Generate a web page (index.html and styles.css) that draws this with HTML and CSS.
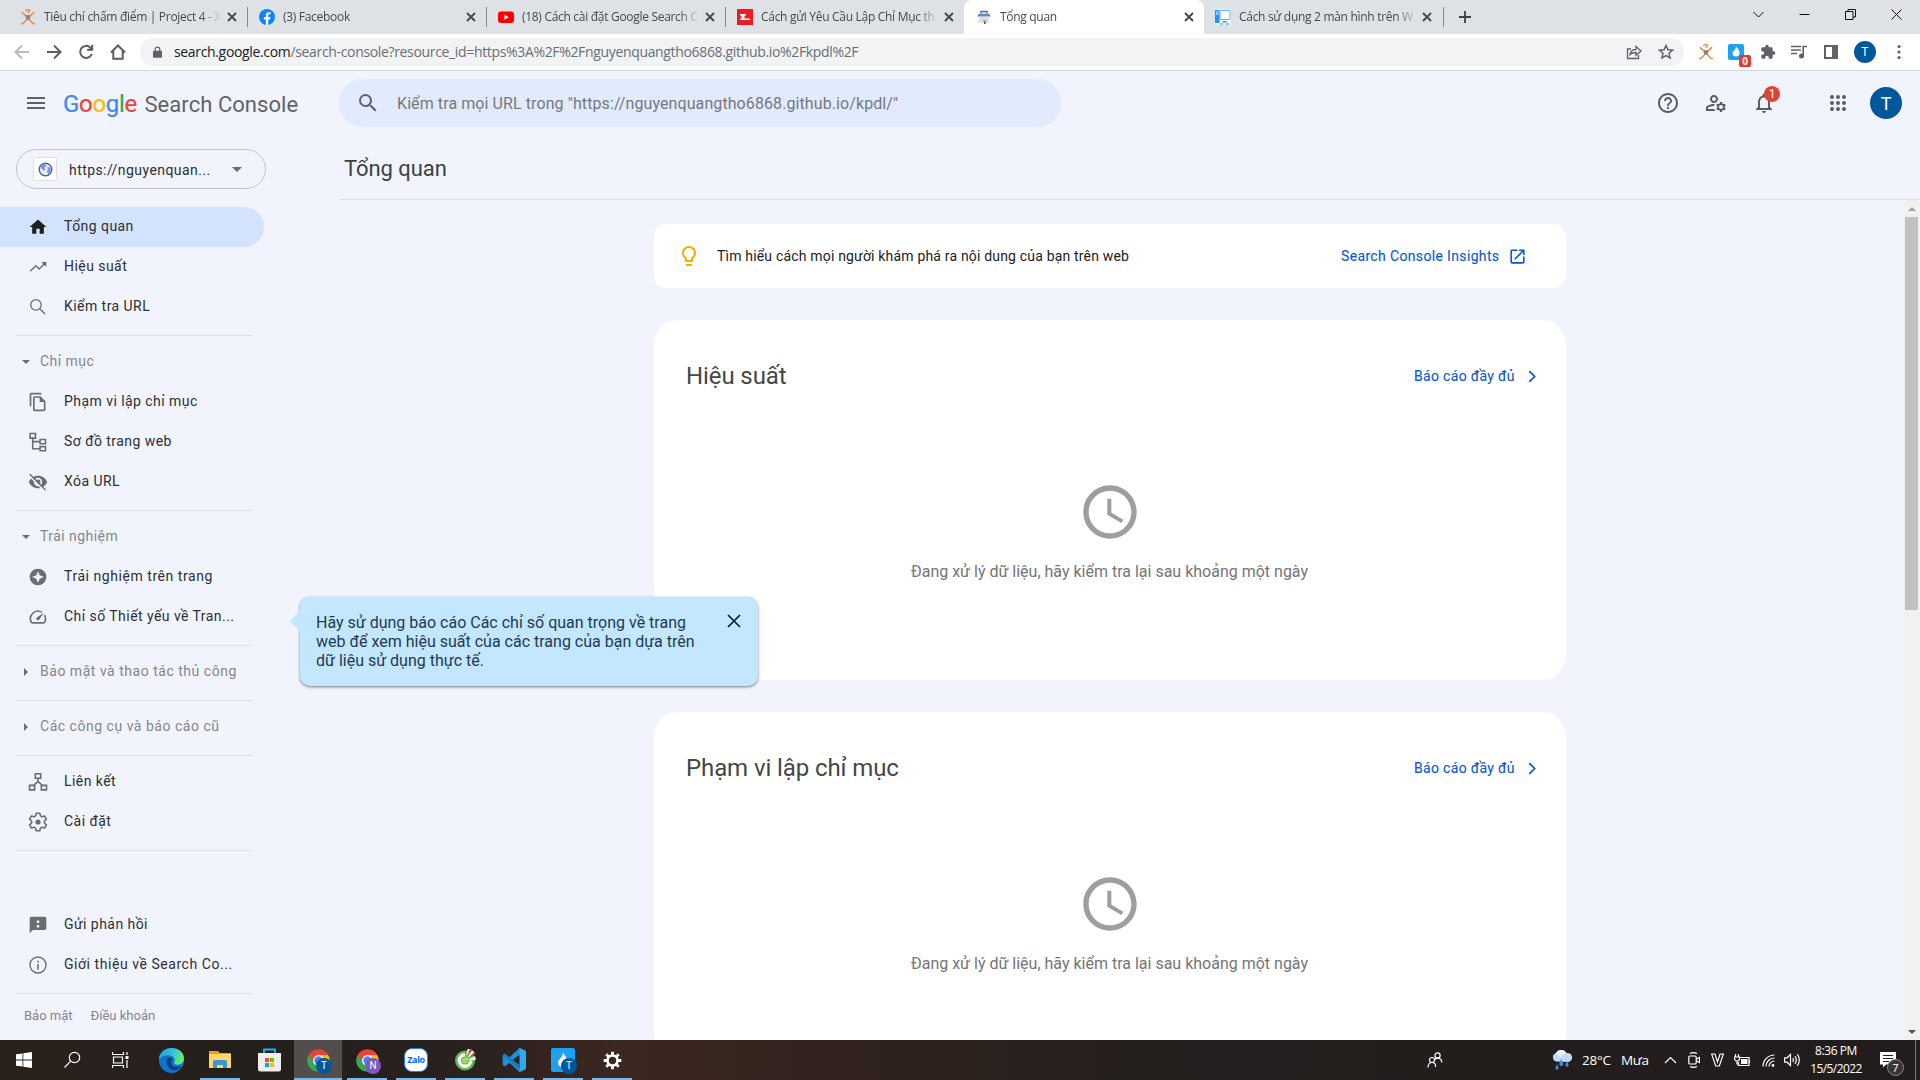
FILE: index.html
```html
<!DOCTYPE html>
<html lang="vi">
<head>
<meta charset="utf-8">
<title>Tổng quan</title>
<link rel="stylesheet" href="styles.css">
</head>
<body>
<svg class="defs" aria-hidden="true">
  <symbol id="x" viewBox="0 0 10 10"><path d="M1 1l8 8M9 1l-8 8" stroke="#45494d" stroke-width="1.9" fill="none"/></symbol>
  <symbol id="runner" viewBox="0 0 16 18"><g fill="none" stroke="#f0883a" stroke-width="1.6" stroke-linecap="round" stroke-linejoin="round"><path d="M5.500 1.500Q8-.2 9.800 1.200Q10 3 8 3.800M1.500 4l4.500 4h4l4.500-4M6 8.500l.5 3.500-4.500 4.500H.8M10 8.500L9.500 12l4.500 4.500h1.200"/></g><path d="M5.500 7h5l-1.200 5H6.700z" fill="#7a8596"/></symbol>
  <symbol id="chrome" viewBox="0 0 48 48"><path d="M24 24L5.500 13.300A21.400 21.400 0 0 1 42.500 13.300z" fill="#ea4335"/><path d="M24 24V13.300h18.500A21.400 21.400 0 0 1 24 45.400z" fill="#fbbc04"/><path d="M24 24l9.300 5.400L24 45.400A21.400 21.400 0 0 1 5.500 13.300z" fill="#34a853"/><path d="M5.500 13.300A21.400 21.400 0 0 1 42.500 13.300H24L14.700 29.300z" fill="#ea4335"/><path d="M5.500 13.300l9.200 16 9.300 5.400-6 10A21.400 21.400 0 0 1 5.500 13.300z" fill="#34a853"/><circle cx="24" cy="24" r="10.500" fill="#fff"/><circle cx="24" cy="24" r="8" fill="#4285f4"/></symbol>
  <symbol id="clock" viewBox="0 0 24 24"><path d="M11.990 2C6.470 2 2 6.480 2 12s4.470 10 9.990 10C17.520 22 22 17.520 22 12S17.520 2 11.990 2zM12 20c-4.420 0-8-3.580-8-8s3.580-8 8-8 8 3.580 8 8-3.580 8-8 8zm.5-13H11v6l5.250 3.150.75-1.230-4.500-2.670z"/></symbol>
  <symbol id="search" viewBox="0 0 24 24"><path d="M15.500 14h-.79l-.28-.27A6.471 6.471 0 0 0 16 9.500 6.500 6.500 0 1 0 9.500 16c1.610 0 3.090-.59 4.230-1.570l.27.28v.79l5 4.990L20.490 19l-4.990-5zm-6 0C7.010 14 5 11.990 5 9.500S7.010 5 9.500 5 14 7.010 14 9.500 11.990 14 9.500 14z"/></symbol>
  <symbol id="down" viewBox="0 0 10 5"><path d="M0 0h10L5 5z"/></symbol>
  <symbol id="right" viewBox="0 0 5 10"><path d="M0 0v10l5-5z"/></symbol>
  <symbol id="cog" viewBox="0 0 22 22"><g fill="none" stroke="#fff"><circle cx="11" cy="11" r="5.800" stroke-width="3"/><path d="M11 .8v4M11 17.200v4M.8 11h4M17.200 11h4M3.800 3.800l2.800 2.800M15.400 15.400l2.800 2.800M3.800 18.200l2.800-2.800M15.400 6.600l2.800-2.800" stroke-width="3.200"/></g></symbol>
</svg>

<div class="tabstrip">
  <div class="tab"><svg class="fav"><use href="#runner"/></svg><span class="tt">Tiêu chí chấm điểm | Project 4 - X</span><svg class="tx"><use href="#x"/></svg></div>
  <div class="tab"><svg class="fav" viewBox="0 0 16 16"><circle cx="8" cy="8" r="8" fill="#1283f7"/><path d="M6.900 16v-5.600H4.900V8h2V6.300c0-2 1.200-3.100 3-3.100.9 0 1.600.1 1.600.1v2h-1c-1 0-1.300.6-1.300 1.200V8h2.200l-.4 2.400H9.200V16z" fill="#fff"/></svg><span class="tt">(3) Facebook</span><svg class="tx"><use href="#x"/></svg></div>
  <div class="tab"><svg class="fav" viewBox="0 0 16 16"><rect y="2.500" width="16" height="11.500" rx="3" fill="#f00"/><path d="M6.400 5.800v5l4.300-2.500z" fill="#fff"/></svg><span class="tt">(18) Cách cài đặt Google Search C</span><svg class="tx"><use href="#x"/></svg></div>
  <div class="tab nosep"><svg class="fav" viewBox="0 0 16 16"><path d="M0 0h16v16H0z" fill="#ed1c24"/><path d="M3 5h6v1.500H7.500v3H13V11H3V9.500h1.500v-3H3z" fill="#fff"/></svg><span class="tt">Cách gửi Yêu Cầu Lập Chỉ Mục th</span><svg class="tx"><use href="#x"/></svg></div>
  <div class="tab active"><svg class="fav" viewBox="0 0 16 16"><path d="M5 4.500V2.500h6v2" fill="none" stroke="#6a6d70" stroke-width="1.500"/><path d="M3 4.500h10l2 3H1z" fill="#999da1"/><path d="M2.500 5.500h11v2h-11z" fill="#4285f4"/><path d="M2.500 7.500h11v6.500h-11z" fill="#e3e3e3"/><path d="M7 9.500a2 2 0 1 0 3.500 0v2H7zM8 12h1.700v3H8z" fill="#555"/></svg><span class="tt">Tổng quan</span><svg class="tx"><use href="#x"/></svg></div>
  <div class="tab last"><svg class="fav" viewBox="0 0 16 16"><path d="M0 0h16v16H0z" fill="#eef5fc"/><path d="M0 1h4.500v13H0z" fill="#1e90ff"/><path d="M1 3h2.500M1 5h2.500" stroke="#fff"/><rect x="5" y="1.500" width="10" height="9" rx="1" fill="#fff" stroke="#5cb0ff"/><path d="M7.500 12h4v1.500h-4zM5 14.500h3v1H5zM11 14.500h3v1h-3z" fill="#2c9aff"/></svg><span class="tt">Cách sử dụng 2 màn hình trên W</span><svg class="tx"><use href="#x"/></svg></div>
  <svg class="plus" viewBox="0 0 12 12"><path d="M6 0v12M0 6h12" stroke="#3c4043" stroke-width="1.800"/></svg>
  <div class="winctl">
    <svg viewBox="0 0 11 11"><path d="M.5 3l5 5 5-5" /></svg>
    <svg viewBox="0 0 11 11"><path d="M.5 5.500h10"/></svg>
    <svg viewBox="0 0 11 11"><path d="M.5 2.500h7.500v8H.5zM3 2.500v-2h7.500v7.500H8"/></svg>
    <svg viewBox="0 0 11 11"><path d="M.5.5l10 10M10.500.5l-10 10"/></svg>
  </div>
</div>

<div class="toolbar">
  <svg class="tb dim" viewBox="0 0 16 16"><path d="M15 8H2M8 1.500L1.500 8 8 14.500"/></svg>
  <svg class="tb" viewBox="0 0 16 16"><path d="M1 8h13M8 1.500L14.500 8 8 14.500"/></svg>
  <svg class="tb" viewBox="0 0 16 16"><path d="M13.800 10A6 6 0 1 1 12.500 3.700L14 5.200M14.200.8v5H9.200"/></svg>
  <svg class="tb" viewBox="0 0 16 16"><path d="M1 8.500L8 1.500l7 7M3.300 7v7.700h9.400V7"/></svg>
  <div class="omnibox">
    <svg class="lock" viewBox="0 0 10 13"><path d="M1 5h8a1 1 0 0 1 1 1v6a1 1 0 0 1-1 1H1a1 1 0 0 1-1-1V6a1 1 0 0 1 1-1z" fill="#5f6368"/><path d="M2.500 5.500v-2a2.500 2.500 0 0 1 5 0v2" fill="none" stroke="#5f6368" stroke-width="1.300"/></svg>
    <span class="url"><b>search.google.com</b>/search-console?resource_id=https%3A%2F%2Fnguyenquangtho6868.github.io%2Fkpdl%2F</span>
    <svg class="ic16 thin" viewBox="0 0 16 16"><path d="M5 5H1.500v9.500h11V11M4 10.500C4.500 7 7 5.500 10 5.500V2.500L15 7l-5 4.300V8.500c-2.500 0-4.500.5-6 2z"/></svg>
    <svg class="ic16 thin" viewBox="0 0 16 16"><path d="M8 1.500l1.900 4.300 4.700.4-3.600 3.100 1.100 4.600L8 11.500l-4.100 2.400L5 9.300 1.400 6.200l4.700-.4z" stroke-width="1.500"/></svg>
  </div>
  <div class="exts">
    <svg class="ext runner"><use href="#runner"/></svg>
    <div class="extb"><svg viewBox="0 0 16 16"><rect width="16" height="16" rx="2" fill="#1da1f2"/><path d="M8 2.500c3 3 3.500 5 3.500 6.500a3.500 3.500 0 0 1-7 0C4.500 7.500 8 6 8 2.500z" fill="#fff"/></svg><i>0</i></div>
    <svg class="ext fill" viewBox="0 0 24 24"><path d="M20.500 11H19V7c0-1.100-.9-2-2-2h-4V3.500a2.500 2.500 0 0 0-5 0V5H4c-1.100 0-2 .9-2 2v3.800h1.500c1.500 0 2.700 1.200 2.700 2.700S5 16.200 3.500 16.200H2V20c0 1.100.9 2 2 2h3.800v-1.500c0-1.500 1.200-2.700 2.700-2.700s2.700 1.200 2.700 2.700V22H17c1.100 0 2-.9 2-2v-4h1.500a2.500 2.500 0 0 0 0-5z"/></svg>
    <svg class="ext" viewBox="0 0 16 16"><path d="M0 2.500h10M0 6h10M0 9.500h6" stroke="#5f6368" stroke-width="1.600"/><path d="M12.200 12V2.500H16" stroke="#5f6368" stroke-width="1.600" fill="none"/><circle cx="10.500" cy="12" r="2.500" fill="#5f6368"/></svg>
    <svg class="ext" viewBox="0 0 16 16"><path d="M1 1h14v14H1zM3 3v10h6V3z" fill="#5f6368" fill-rule="evenodd"/></svg>
    <span class="ava small">T</span>
    <svg class="ext" viewBox="0 0 16 16" fill="#5f6368"><circle cx="8" cy="2.500" r="1.600"/><circle cx="8" cy="8" r="1.600"/><circle cx="8" cy="13.500" r="1.600"/></svg>
  </div>
</div>

<div class="page">
  <header class="top">
    <svg class="burger" viewBox="0 0 18 14"><path d="M0 2h18M0 7h18M0 12h18" stroke="#5f6368" stroke-width="2"/></svg>
    <div class="brand"><span class="g"><span class="b">G</span><span class="r">o</span><span class="y">o</span><span class="b">g</span><span class="gr">l</span><span class="r">e</span></span><span class="sc">Search Console</span></div>
    <div class="sbox"><svg><use href="#search"/></svg><span>Kiểm tra mọi URL trong "https://nguyenquangtho6868.github.io/kpdl/"</span></div>
    <div class="acts">
      <svg viewBox="0 0 24 24"><path d="M11 18h2v-2h-2v2zm1-16C6.480 2 2 6.480 2 12s4.480 10 10 10 10-4.480 10-10S17.520 2 12 2zm0 18c-4.410 0-8-3.590-8-8s3.590-8 8-8 8 3.590 8 8-3.590 8-8 8zm0-14c-2.210 0-4 1.790-4 4h2c0-1.100.9-2 2-2s2 .9 2 2c0 2-3 1.750-3 5h2c0-2.250 3-2.500 3-5 0-2.210-1.790-4-4-4z"/></svg>
      <svg viewBox="0 0 24 24"><path d="M4 18v-.65c0-.34.16-.66.41-.81C6.100 15.530 8.030 15 10 15c.03 0 .05 0 .08.010.1-.7.300-1.370.590-1.980-.22-.020-.44-.030-.67-.030-2.420 0-4.680.67-6.610 1.820-.88.52-1.390 1.500-1.390 2.530V20h9.260c-.42-.6-.75-1.280-.97-2H4zM10 12c2.210 0 4-1.790 4-4s-1.790-4-4-4-4 1.790-4 4 1.790 4 4 4zm0-6c1.100 0 2 .9 2 2s-.9 2-2 2-2-.9-2-2 .9-2 2-2zM20.750 16c0-.22-.030-.42-.060-.63l1.140-1.010-1-1.730-1.450.49c-.32-.27-.68-.48-1.080-.63L18 11h-2l-.3 1.490c-.4.15-.76.36-1.080.63l-1.450-.49-1 1.730 1.140 1.010c-.030.210-.060.410-.060.630s.030.420.060.630l-1.140 1.010 1 1.730 1.450-.49c.32.27.68.48 1.080.63L16 21h2l.3-1.490c.4-.15.76-.36 1.080-.63l1.450.49 1-1.730-1.140-1.010c.030-.210.060-.410.060-.630zM17 18c-1.100 0-2-.9-2-2s.9-2 2-2 2 .9 2 2-.9 2-2 2z"/></svg>
      <div class="bell"><svg viewBox="0 0 24 24"><path d="M12 22c1.100 0 2-.9 2-2h-4c0 1.100.9 2 2 2zm6-6v-5c0-3.070-1.630-5.640-4.500-6.320V4c0-.83-.67-1.500-1.500-1.500s-1.500.67-1.500 1.500v.68C7.640 5.360 6 7.920 6 11v5l-2 2v1h16v-1l-2-2zm-2 1H8v-6c0-2.480 1.510-4.500 4-4.500s4 2.020 4 4.500v6z"/></svg><i>1</i></div>
      <svg class="apps" viewBox="0 0 24 24"><path d="M6 8a2 2 0 1 0 0-4 2 2 0 0 0 0 4zm6 0a2 2 0 1 0 0-4 2 2 0 0 0 0 4zm6 0a2 2 0 1 0 0-4 2 2 0 0 0 0 4zM6 14a2 2 0 1 0 0-4 2 2 0 0 0 0 4zm6 0a2 2 0 1 0 0-4 2 2 0 0 0 0 4zm6 0a2 2 0 1 0 0-4 2 2 0 0 0 0 4zM6 20a2 2 0 1 0 0-4 2 2 0 0 0 0 4zm6 0a2 2 0 1 0 0-4 2 2 0 0 0 0 4zm6 0a2 2 0 1 0 0-4 2 2 0 0 0 0 4z"/></svg>
      <span class="ava">T</span>
    </div>
  </header>

  <div class="body">
    <nav class="side">
      <div class="prop"><span class="globe"><svg viewBox="0 0 16 16"><circle cx="8" cy="8" r="6.700" fill="#e8eefb" stroke="#4f5fb5" stroke-width="1.500"/><path d="M3 4.500L7 2l2 1.500-2 3 1 2-2 .5L3.500 7zM10 5l3.500 1v4L11 13l-1.500-3 1-2z" fill="#8193d2"/></svg></span><span class="pt">https://nguyenquan...</span><svg class="caret"><use href="#down"/></svg></div>

      <div class="it on"><svg viewBox="0 0 24 24"><path d="M10 20v-6h4v6h5v-8h3L12 3 2 12h3v8z"/></svg><span>Tổng quan</span></div>
      <div class="it"><svg viewBox="0 0 24 24"><path d="M16 6l2.290 2.290-4.880 4.880-4-4L2 16.590 3.200 17.800l6.210-6.200 4 4 6.090-6.100L22 12V6z"/></svg><span>Hiệu suất</span></div>
      <div class="it"><svg viewBox="0 0 24 24"><circle cx="9.500" cy="9.500" r="6.300" class="ln"/><path d="M14 14l6.500 6.500" class="ln"/></svg><span>Kiểm tra URL</span></div>
      <hr>
      <div class="sec"><svg class="d"><use href="#down"/></svg><span>Chỉ mục</span></div>
      <div class="it"><svg viewBox="0 0 24 24"><path d="M16 1H4c-1.100 0-2 .9-2 2v14h2V3h12V1zm-1 4H8c-1.100 0-2 .9-2 2v14c0 1.100.9 2 2 2h11c1.100 0 2-.9 2-2V11l-6-6zm4 16H8V7h6v5h5v9z"/></svg><span>Phạm vi lập chỉ mục</span></div>
      <div class="it"><svg viewBox="0 0 24 24"><path d="M2.500 1.800h6.500v5.500H2.500zM14.500 9h6.500v5h-6.500zM14.500 17.500h6.500v5h-6.500zM5.700 7.500V20h8.500M5.700 11.500h8.500" class="ln w2"/></svg><span>Sơ đồ trang web</span></div>
      <div class="it"><svg viewBox="0 0 24 24"><path d="M1 12C2.700 7.600 7 4.500 12 4.500s9.300 3.100 11 7.500c-1.700 4.400-6 7.500-11 7.500S2.700 16.400 1 12zm11-5a5 5 0 1 0 0 10 5 5 0 0 0 0-10z" fill-rule="evenodd"/><circle cx="12" cy="12" r="3"/><path d="M1.500 4.500L19.500 22.500" stroke="#f1f4fd" stroke-width="2"/><path d="M2 2.500L21 21.500" stroke="#6b6e71" stroke-width="1.600"/></svg><span>Xóa URL</span></div>
      <hr>
      <div class="sec"><svg class="d"><use href="#down"/></svg><span>Trải nghiệm</span></div>
      <div class="it wide"><svg viewBox="0 0 24 24"><path d="M12 2a10 10 0 1 0 0 20 10 10 0 0 0 0-20zm2.100 12.100L12 19l-2.100-4.900L5 12l4.900-2.100L12 5l2.100 4.900L19 12z" fill-rule="evenodd"/></svg><span>Trải nghiệm trên trang</span></div>
      <div class="it"><svg viewBox="0 0 24 24"><path d="M20.380 8.570l-1.230 1.850a8 8 0 0 1-.22 7.580H5.070A8 8 0 0 1 15.580 6.850l1.850-1.230A10 10 0 0 0 3.350 19a2 2 0 0 0 1.720 1h13.850a2 2 0 0 0 1.740-1 10 10 0 0 0-.27-10.440zm-9.790 6.840a2 2 0 0 0 2.830 0l5.660-8.490-8.490 5.660a2 2 0 0 0 0 2.830z"/></svg><span>Chỉ số Thiết yếu về Tran...</span></div>
      <hr>
      <div class="sec wide"><svg class="r"><use href="#right"/></svg><span>Bảo mật và thao tác thủ công</span></div>
      <hr>
      <div class="sec wide"><svg class="r"><use href="#right"/></svg><span>Các công cụ và báo cáo cũ</span></div>
      <hr>
      <div class="it"><svg viewBox="0 0 24 24"><path d="M8.800 2h6.400v5.500H8.800zM1.800 16h6.200v5.500H1.800zM16 16h6.200v5.500H16zM12 7.500V12M12 11.500L6.500 16M12 11.500L17.500 16" class="ln w2"/></svg><span>Liên kết</span></div>
      <div class="it"><svg viewBox="0 0 24 24"><path d="M9.800 1.500h4.400l.7 3.200 1.900 1.100 3.100-1 2.200 3.800-2.400 2.200v2.400l2.400 2.200-2.200 3.800-3.100-1-1.900 1.100-.7 3.200H9.800l-.7-3.200-1.900-1.100-3.100 1-2.200-3.800 2.400-2.200v-2.400L1.900 8.600l2.200-3.800 3.100 1 1.900-1.100z" class="ln w2" stroke-linejoin="round"/><circle cx="12" cy="12" r="3.100"/></svg><span>Cài đặt</span></div>
      <hr>
      <div class="it gap"><svg viewBox="0 0 24 24"><path d="M20 2H4c-1.100 0-2 .9-2 2v18l4-4h14c1.100 0 2-.9 2-2V4c0-1.100-.9-2-2-2zm-6.500 13h-3v-3h3zm0-5.500h-3v-3h3z"/></svg><span>Gửi phản hồi</span></div>
      <div class="it wide"><svg viewBox="0 0 24 24"><circle cx="12" cy="12" r="9.600" class="ln"/><path d="M11 11h2v6.500h-2zM11 7h2v2h-2z"/></svg><span>Giới thiệu về Search Co...</span></div>
      <hr>
      <div class="foot"><span>Bảo mật</span><span>Điều khoản</span></div>
    </nav>

    <main class="main">
      <h1>Tổng quan</h1>
      <div class="scroll">
        <div class="cards">
          <section class="tip"><svg class="bulb" viewBox="0 0 24 24"><path d="M9 21c0 .55.45 1 1 1h4c.55 0 1-.45 1-1v-1H9v1zm3-19C8.140 2 5 5.140 5 9c0 2.380 1.190 4.470 3 5.740V17c0 .55.45 1 1 1h6c.55 0 1-.45 1-1v-2.260c1.810-1.270 3-3.360 3-5.740 0-3.860-3.140-7-7-7zm2.850 11.100l-.85.6V16h-4v-2.300l-.85-.6A4.997 4.997 0 0 1 7 9c0-2.760 2.240-5 5-5s5 2.240 5 5c0 1.630-.8 3.160-2.150 4.100z"/></svg><span class="msg">Tìm hiểu cách mọi người khám phá ra nội dung của bạn trên web</span><a class="ins">Search Console Insights</a><svg class="open" viewBox="0 0 24 24"><path d="M19 19H5V5h7V3H5c-1.110 0-2 .9-2 2v14c0 1.100.89 2 2 2h14c1.100 0 2-.9 2-2v-7h-2v7zM14 3v2h3.590l-9.830 9.830 1.410 1.410L19 6.410V10h2V3h-7z"/></svg></section>
          <section class="card"><div class="ch"><h2>Hiệu suất</h2><a>Báo cáo đầy đủ</a><svg viewBox="0 0 8 12"><path d="M1 1l5 5-5 5"/></svg></div><div class="wait"><svg><use href="#clock"/></svg><p>Đang xử lý dữ liệu, hãy kiểm tra lại sau khoảng một ngày</p></div></section>
          <section class="card"><div class="ch"><h2>Phạm vi lập chỉ mục</h2><a>Báo cáo đầy đủ</a><svg viewBox="0 0 8 12"><path d="M1 1l5 5-5 5"/></svg></div><div class="wait"><svg><use href="#clock"/></svg><p>Đang xử lý dữ liệu, hãy kiểm tra lại sau khoảng một ngày</p></div></section>
        </div>
        <div class="bar"><svg class="up" viewBox="0 0 8 4"><path d="M0 4h8L4 0z"/></svg><span class="thumb"></span><svg class="dn" viewBox="0 0 8 4"><path d="M0 0h8L4 4z"/></svg></div>
      </div>
    </main>
  </div>

  <div class="bubble"><p>Hãy sử dụng báo cáo Các chỉ số quan trọng về trang<br>web để xem hiệu suất của các trang của bạn dựa trên<br>dữ liệu sử dụng thực tế.</p><svg viewBox="0 0 14 14"><path d="M1 1l12 12M13 1L1 13" stroke="#001d35" stroke-width="1.700"/></svg></div>
</div>

<footer class="task">
  <div class="sys">
    <span><svg width="16" height="16" viewBox="0 0 16 16"><path d="M0 2.300l6.500-.9v6.200H0zM7.300 1.300L16 0v7.600H7.300zM0 8.400h6.500v6.200L0 13.700zM7.300 8.400H16V16l-8.700-1.300z" fill="#fff"/></svg></span>
    <span><svg width="18" height="18" viewBox="0 0 18 18"><circle cx="11.500" cy="6.500" r="5.200" class="wl"/><path d="M7.700 10.200L1.500 16.500" class="wl"/></svg></span>
    <span><svg width="17" height="16" viewBox="0 0 17 16"><path d="M.5 0v2.500h11V0M.5 16v-2.500h11V16M1.500 5h9v6h-9zM15 0v3M15 8v8" class="wl"/><path d="M13.500 4h3v3h-3z" fill="#fff"/></svg></span>
  </div>
  <div class="apps">
    <span><svg width="25" height="25" viewBox="0 0 24 24"><defs><linearGradient id="e1" x1="0" x2="1" y1="0" y2=".3"><stop stop-color="#1b9de2"/><stop offset=".6" stop-color="#35c1d8"/><stop offset="1" stop-color="#66eb6e"/></linearGradient></defs><circle cx="12" cy="12" r="12" fill="#0f74cc"/><path d="M0 11C0 4 6 0 12 0c7 0 12 4.500 12 10 0 4-3 6-6.500 6-2 0-3.500-.8-3-2 2-3-1-7-5-7C5 7 1 9 0 11z" fill="url(#e1)"/><path d="M9 9c-3 3-2 10 4 12 3 .9 7-.5 9-4-3 1.800-9 1.500-10-2-.6-2 .2-3.500 1-4-1-2-3-2.500-4-2z" fill="#123f7d"/></svg></span>
    <span class="run"><svg width="22" height="20" viewBox="0 0 22 20"><path d="M0 1h9l2 2h11v15H0z" fill="#e9a11c"/><path d="M0 4h22v14H0z" fill="#ffd667"/><path d="M4 18v-6q0-2 2-2h10q2 0 2 2v6h-4v-3H8v3z" fill="#3b93d8"/></svg></span>
    <span><svg width="23" height="24" viewBox="0 0 23 24"><path d="M6 7V1.500h11V7" fill="none" stroke="#29b1ee" stroke-width="1.800"/><path d="M0 5h23v16q0 2.500-2.500 2.500h-18Q0 23.500 0 21z" fill="#eee"/><path d="M7 10h4v4H7z" fill="#f25022"/><path d="M12 10h4v4h-4z" fill="#7fba00"/><path d="M7 15h4v4H7z" fill="#00a4ef"/><path d="M12 15h4v4h-4z" fill="#ffb900"/></svg></span>
    <span class="run cur"><svg width="25" height="25"><use href="#chrome"/></svg><i>T</i></span>
    <span class="run"><svg width="25" height="25"><use href="#chrome"/></svg><i class="pu">N</i></span>
    <span class="run"><b class="zalo">Zalo</b></span>
    <span class="run"><svg width="22" height="22" viewBox="0 0 22 22"><circle cx="11" cy="11.500" r="10" fill="#58b947"/><path d="M11 4a7.500 7.500 0 1 0 7.500 7.500H15A4 4 0 1 1 11 7.500z" fill="#fff"/><circle cx="11" cy="11.500" r="3" fill="#a5d86e"/><path d="M12 9l1.500-9h2.500zM13 10l5-9 3 3zM13 11l8-4 1 4z" fill="#f2f2f2"/><path d="M13 8l3-8h2zM14 9.500l6-6.500 1 2z" fill="#e0533c"/></svg></span>
    <span class="run"><svg width="24" height="24" viewBox="0 0 24 24"><path d="M17.500 0L24 3v18l-6.500 3-10-9.200L3 18.300.7 17V7L3 5.700l4.500 3.500zM18 6.500L10.500 12l7.500 5.500z" fill="#1f8fd8" fill-rule="evenodd"/><path d="M17.500 0L24 3v18l-6.500 3z" fill="#32a9ef"/><path d="M.7 7L3 5.700 18 17.500V22zM2.700 12L.5 14.500V9.500z" fill="#1877b8"/></svg></span>
    <span class="run"><svg width="24" height="24" viewBox="0 0 24 24"><rect width="24" height="24" rx="2" fill="#1da1f2"/><path d="M12 4c2 5 5 6 5 10.500a5 5 0 0 1-10 0C7 11 12 10 12 4z" fill="#fff"/></svg><i>T</i></span>
    <span class="run"><svg width="19" height="19"><use href="#cog"/></svg></span>
  </div>
  <div class="tray">
    <svg class="people" width="16" height="17" viewBox="0 0 16 17"><g class="wl"><circle cx="5" cy="8" r="2.500"/><path d="M1 15.500Q1 10.500 5 10.500T8.500 15"/><circle cx="10.500" cy="3.500" r="2.600"/><path d="M7.500 8Q9 6 11 6.200q3.500.3 3.800 4.300"/></g></svg>
    <svg class="rain" width="22" height="20" viewBox="0 0 22 20"><path d="M5 11.500A4.500 4.500 0 0 1 5 3 6 6 0 0 1 15.500 3 4.500 4.500 0 0 1 17.500 12z" fill="#bfdcf6"/><path d="M5 3a6 6 0 0 1 10.500 0Q10 4 9 8 7 4 5 3z" fill="#e8f4fd"/><path d="M10 9l2 4a2 2 0 1 1-3.500 0zM16 11l1.500 3.500a1.600 1.600 0 1 1-3 0zM6 14l1.500 3.500a1.600 1.600 0 1 1-3 0z" fill="#3f8ee0"/></svg>
    <span class="w1">28°C</span><span class="w2t">Mưa</span>
    <svg class="ti" width="13" height="8" viewBox="0 0 13 8"><path d="M1 7l5.500-5.500L12 7" class="wl"/></svg>
    <svg class="ti" width="12" height="16" viewBox="0 0 12 16"><path d="M2 1.500Q5.500-.3 9 1.500M2 14.500q3.500 1.800 7 0M.8 5Q.8 4 2 4h5q1.200 0 1.200 1v6q0 1-1.200 1H2Q.8 12 .8 11zM8.500 7l3-1.500v5l-3-1.500" class="wl"/></svg>
    <svg class="ti" width="13" height="14" viewBox="0 0 13 14"><path d="M.6 1H4l2.500 8L9 1h3.400L8.300 13H4.700z" class="wl"/></svg>
    <svg class="ti batt" width="17" height="13" viewBox="0 0 17 13"><path d="M5.500 3.500H15v8H4.500V8M15.500 6v3M1.500 0v3M4.500 0v3M.5 3h5v2.500L4 7H2L.5 5.500zM3 7v3h1.500" class="wl"/><path d="M7 5h6.500v5H7z" fill="#fff"/></svg>
    <svg class="ti" width="13" height="13" viewBox="0 0 13 13"><path d="M1 12.500A11.500 11.500 0 0 1 12.500 1M4 12.500A8.500 8.500 0 0 1 12.500 4M7 12.500A5.500 5.500 0 0 1 12.500 7" class="wl"/><circle cx="11" cy="11.500" r="1.400" fill="#fff"/></svg>
    <svg class="ti vol" width="17" height="14" viewBox="0 0 17 14"><path d="M.6 4.800h2.500L6.500 1.500v11L3.100 9.200H.6zM8.800 5q1.200 2 0 4M11 3q2.500 4 0 8M13.300 1q4 6 0 12" class="wl"/></svg>
    <div class="time"><span>8:36 PM</span><span class="dt">15/5/2022</span></div>
    <div class="note"><svg width="16" height="16" viewBox="0 0 16 16"><path d="M0 0h16v12.500H6L3 15.500v-3H0z" fill="#fff"/><path d="M3 3.500h10M3 6.500h10M3 9.500h6" stroke="#222" stroke-width="1.200"/></svg><i>7</i></div>
    <span class="desk"></span>
  </div>
</footer>
</body>
</html>
```
FILE: styles.css
```css
* { box-sizing: border-box; }
body { margin: 0; width: 1920px; height: 1080px; overflow: hidden; display: flex; flex-direction: column; font-family: Roboto, sans-serif; background: #f1f4fd; }
svg { flex: none; display: block; }
i { font-style: normal; }
.defs { position: absolute; width: 0; height: 0; }

/* browser tabs */
.tabstrip { height: 34px; flex: none; background: #dee1e6; display: flex; align-items: center; padding-left: 8px; font: 12px "Open Sans", sans-serif; color: #45494d; }
.tab { width: 239px; height: 34px; display: flex; align-items: center; padding: 0 10px 0 12px; position: relative; }
.tab::after { content: ""; width: 1px; height: 20px; background: #85888c; position: absolute; right: -1px; top: 7px; }
.tab.nosep::after, .tab.active::after { display: none; }
.tab.active { background: #fff; border-radius: 8px 8px 0 0; width: 240px; }
.tab.last { padding: 0 11px; }
.fav { width: 16px; height: 16px; }
.tt { flex: 1; min-width: 0; margin: 0 5px 0 8px; padding-bottom: 1px; white-space: nowrap; letter-spacing: -.3px; -webkit-mask-image: linear-gradient(90deg, #000 88%, transparent); mask-image: linear-gradient(90deg, #000 88%, transparent); }
.tx { width: 10px; height: 10px; }
.plus { width: 12px; height: 12px; margin-left: 16px; }
.winctl { margin-left: auto; display: flex; gap: 35px; padding: 0 18px 6px 0; }
.winctl svg { width: 11px; height: 11px; fill: none; stroke: #111; stroke-width: 1; }

/* browser toolbar */
.toolbar { height: 37px; flex: none; background: #fff; border-bottom: 1px solid #d5d7da; display: flex; align-items: center; padding: 0 14px; }
.tb { width: 16px; height: 16px; margin-right: 16px; fill: none; stroke: #5a5e63; stroke-width: 2; }
.tb.dim { stroke: #b9bbbe; }
.tb:nth-child(4) { margin-right: 14px; }
.omnibox { width: 1544px; flex: none; height: 28px; border-radius: 14px; background: #f1f3f4; display: flex; align-items: center; padding: 0 10px 0 13px; gap: 16px; }
.lock { width: 9px; height: 12px; }
.url { flex: 1; margin-left: -4px; padding-bottom: 1px; font: 14px "Open Sans", sans-serif; letter-spacing: -.34px; color: #6a6e73; }
.url b { font-weight: 400; color: #202124; }
.ic16 { width: 16px; height: 16px; }
.thin { fill: none; stroke: #5f6368; stroke-width: 1.3; }
.exts { flex: 1; display: flex; align-items: center; justify-content: space-between; padding: 0 0 0 15px; }
.ext { width: 16px; height: 16px; }
.ext.runner { width: 14px; height: 18px; }
.ext.fill { fill: #5f6368; margin-left: 1px; }
.extb { width: 16px; height: 16px; position: relative; }
.extb i { position: absolute; left: 11px; top: 11px; width: 12px; height: 12px; border-radius: 2px; background: #e53935; color: #fff; font: 700 10px/12px "Open Sans", sans-serif; text-align: center; }
.ava { width: 32px; height: 32px; border-radius: 50%; background: #01579b; color: #fff; font-size: 18px; display: flex; align-items: center; justify-content: center; }
.ava.small { width: 22px; height: 22px; font-size: 12px; }
.toolbar { padding-right: 13px; }

/* console header */
.page { flex: 1; min-height: 0; position: relative; display: flex; flex-direction: column; }
.top { height: 64px; flex: none; display: flex; align-items: center; padding-left: 27px; }
.burger { width: 18px; height: 14px; }
.brand { width: 276px; margin-left: 18px; padding-top: 2px; display: flex; align-items: baseline; white-space: nowrap; }
.g { font-size: 24px; letter-spacing: -.3px; width: 81.500px; -webkit-text-stroke: .2px; }
.sc { font-size: 22px; letter-spacing: .05px; color: #5f6368; }
.b { color: #4285f4; } .r { color: #ea4335; } .y { color: #fbbc04; } .gr { color: #34a853; }
.sbox { width: 722px; height: 48px; border-radius: 24px; background: #e2ebfd; display: flex; align-items: center; padding-left: 17px; gap: 17px; color: #75787c; font-size: 16px; letter-spacing: .09px; }
.sbox svg { width: 24px; height: 24px; fill: #5f6368; }
.acts { margin-left: auto; padding-right: 18px; display: flex; align-items: center; gap: 24px; }
.acts svg { width: 24px; height: 24px; fill: #5a5e63; }
.acts .apps { margin: 0 -4px 0 26px; }
.bell { position: relative; }
.bell i { position: absolute; left: 12px; top: -5px; width: 16px; height: 16px; border-radius: 50%; background: #db4437; color: #fff; font-size: 12px; line-height: 16px; text-align: center; }

/* side navigation */
.body { flex: 1; min-height: 0; display: flex; }
.side { width: 340px; flex: none; font-size: 14px; letter-spacing: .45px; color: #2d2f31; }
.prop { width: 250px; height: 40px; margin: 14px 0 18px 16px; border: 1px solid #c2c4c6; border-radius: 20px; display: flex; align-items: center; padding-left: 16px; }
.globe { width: 24px; height: 24px; background: #fff; border: 1px solid #e0e0e0; border-radius: 2px; display: flex; align-items: center; justify-content: center; }
.globe svg { width: 15px; height: 15px; }
.pt { width: 151px; margin: 2px 12px 0 12px; letter-spacing: .43px; }
.caret { width: 10px; height: 5px; fill: #6b6e71; }
.it { height: 40px; display: flex; align-items: center; padding: 0 0 0 28px; width: 264px; white-space: nowrap; }
.it svg { width: 20px; height: 20px; fill: #6b6e71; margin-right: 16px; }
.it span, .sec span { padding-bottom: 2px; }
.it.wide { letter-spacing: .55px; }
.sec.wide { letter-spacing: .52px; }
.ln { fill: none; stroke: #6b6e71; stroke-width: 1.6; }
.w2 { stroke-width: 1.9; }
.it.on svg { fill: #1f1f1f; }
.on { background: #d3e3fd; border-radius: 0 20px 20px 0; }
.side hr { width: 236px; height: 1px; border: 0; margin: 8px 0 6px 16px; background: #dfe1e4; }
.sec { height: 40px; display: flex; align-items: center; padding-left: 22px; color: #83868a; white-space: nowrap; }
.sec svg { fill: #6b6e71; }
.sec .d { width: 8px; height: 4px; margin-right: 10px; }
.sec .r { width: 4px; height: 8px; margin: 0 12px 0 2px; }
.it.gap { margin-top: 54px; }
.foot { display: flex; gap: 18px; padding: 8px 0 0 24px; font-size: 13px; letter-spacing: 0; color: #83868a; }

/* main column */
.main { flex: 1; min-width: 0; display: flex; flex-direction: column; }
h1 { height: 65px; flex: none; margin: 0; padding: 22px 0 0 4px; font-size: 22px; line-height: 24px; font-weight: 400; letter-spacing: -.05px; color: #3c4043; border-bottom: 1px solid #dfe1e4; }
.scroll { flex: 1; min-height: 0; display: flex; overflow: hidden; }
.cards { flex: 1; padding: 24px 0 0 314px; }
.tip { width: 912px; height: 64px; border-radius: 12px; background: #fff; display: flex; align-items: center; padding-left: 23px; margin-bottom: 32px; }
.bulb { width: 24px; height: 24px; fill: #f9ab00; margin: 0 16px 0 0; }
.msg { width: 624px; font-size: 14px; letter-spacing: .18px; color: #202124; padding-bottom: 1px; }
.ins, .ch a { color: #0b57d0; font-size: 14px; }
.ins { width: 166px; letter-spacing: .35px; -webkit-text-stroke: .1px; }
.open { width: 19px; height: 19px; margin-left: 1px; fill: #0b57d0; }
.card { width: 912px; height: 360px; border-radius: 24px; background: #fff; margin-bottom: 32px; padding: 0 28px 0 32px; }
.ch { display: flex; align-items: center; padding-top: 40px; height: 72px; }
h2 { flex: 1; margin: 0; font-size: 24px; font-weight: 400; letter-spacing: -.1px; color: #444746; white-space: nowrap; }
.ch a { letter-spacing: .32px; -webkit-text-stroke: .1px; width: 114px; }
.ch svg { width: 9px; height: 13px; margin-right: 1px; fill: none; stroke: #0b57d0; stroke-width: 1.6; }
.wait { display: flex; flex-direction: column; align-items: center; padding-top: 88px; margin-left: -5px; }
.wait svg { width: 64px; height: 64px; fill: #9e9e9e; }
.wait p { margin: 18px 0 0; font-size: 16px; color: #757575; line-height: 20px; }
.bar { width: 17px; background: #f1f1f1; display: flex; flex-direction: column; align-items: center; }
.bar svg { width: 8px; height: 4px; fill: #505050; margin: 7px 0 6px; }
.bar .up { fill: #a3a3a3; }
.bar .dn { margin: auto 0 6px; }
.thumb { width: 13px; height: 393px; background: #c1c1c1; }

/* hint bubble */
.bubble { position: absolute; left: 300px; top: 526px; width: 458px; height: 89px; border-radius: 10px; background: #c2e7ff; box-shadow: 0 1px 3px rgba(0,0,0,.5); display: flex; padding: 16px 17px 0 16px; color: #1f3a50; }
.bubble::before { content: ""; position: absolute; left: -10px; top: 14px; border: 10px solid transparent; border-left: 0; border-right-color: #c2e7ff; }
.bubble p { margin: 0; flex: 1; font-size: 16px; line-height: 19px; white-space: nowrap; }
.bubble svg { width: 14px; height: 14px; margin-top: 1px; }

/* system taskbar */
.task { height: 40px; flex: none; display: flex; background: linear-gradient(90deg, #2b211c 0, #231f1d 15%, #2b211e 25%, #3c2721 32%, #33231e 42%, #241f1d 60%, #211d1c 100%); color: #fff; }
.wl { fill: none; stroke: #fff; stroke-width: 1.2; }
.sys, .task .apps { display: flex; }
.sys span { width: 48px; display: flex; align-items: center; justify-content: center; }
.task .apps { gap: 1px; padding-left: 3px; }
.task .apps span { width: 48px; display: flex; align-items: center; justify-content: center; position: relative; }
.run::after { content: ""; position: absolute; left: 4px; right: 4px; bottom: 0; height: 2px; background: #76b9ed; }
.cur { background: #534d4b; }
.cur::after { left: 0; right: 0; }
.task .apps i { position: absolute; left: 22px; top: 18px; width: 16px; height: 16px; border-radius: 50%; background: #01579b; font-size: 10px; line-height: 16px; text-align: center; }
.task .apps .pu { background: #7e57c2; }
.zalo { width: 24px; height: 24px; border-radius: 8px; background: #fff; border: 1px solid #2f7df6; color: #0068ff; font: 700 9px/22px "Open Sans", sans-serif; letter-spacing: -.4px; text-align: center; }
.tray { margin-left: auto; display: flex; align-items: center; font-family: "Open Sans", sans-serif; width: 493px; }
.rain { margin-left: 108px; }
.w1 { font-size: 13.500px; letter-spacing: -.2px; margin-left: 9px; width: 39px; }
.w2t { font-size: 13.500px; letter-spacing: -.3px; width: 43px; }
.ti { margin-right: 11px; }
.ti.batt { margin: 0 11px 0 -1px; }
.ti.vol { margin: 0 10px 0 -2px; }
.time { font-size: 12px; letter-spacing: -.42px; line-height: 18px; display: flex; flex-direction: column; align-items: center; width: 56px; margin-left: -3px; }
.dt { letter-spacing: -.58px; }
.note { position: relative; margin-left: 16px; }
.note i { position: absolute; left: 7px; top: 7px; width: 17px; height: 17px; border-radius: 50%; background: #3a3635; border: 1px solid #8d8a89; font-size: 11px; line-height: 15px; text-align: center; }
.desk { width: 1px; height: 40px; background: #777; margin-left: auto; margin-right: 4px; }
```
